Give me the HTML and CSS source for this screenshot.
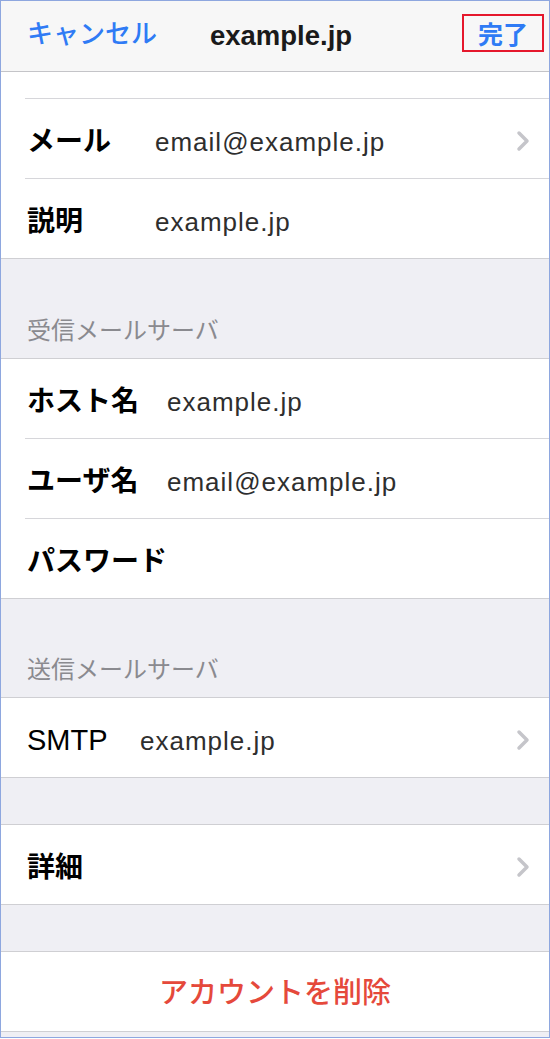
FILE: index.html
```html
<!DOCTYPE html>
<html lang="ja">
<head>
    <meta charset="UTF-8">
    <meta name="viewport" content="width=device-width, initial-scale=1.0">
    <title>example.jp</title>
    <link rel="stylesheet" href="styles.css">
</head>
<body>
    <div class="screen">
        <header class="navbar">
            <span class="nav-cancel">キャンセル</span>
            <span class="nav-title">example.jp</span>
            <span class="nav-done">完了</span>
        </header>

        <div class="group group-account">
            <div class="row row-cut"></div>
            <div class="row">
                <span class="label">メール</span>
                <span class="value">email@example.jp</span>
                <svg class="chevron" width="14" height="22" viewBox="0 0 14 22"><polyline points="3,3 11,11 3,19" /></svg>
            </div>
            <div class="row">
                <span class="label">説明</span>
                <span class="value">example.jp</span>
            </div>
        </div>

        <div class="section-header">受信メールサーバ</div>
        <div class="group group-incoming">
            <div class="row">
                <span class="label">ホスト名</span>
                <span class="value">example.jp</span>
            </div>
            <div class="row">
                <span class="label">ユーザ名</span>
                <span class="value">email@example.jp</span>
            </div>
            <div class="row">
                <span class="label">パスワード</span>
            </div>
        </div>

        <div class="section-header section-header-2">送信メールサーバ</div>
        <div class="group group-outgoing">
            <div class="row">
                <span class="label label-latin">SMTP</span>
                <span class="value">example.jp</span>
                <svg class="chevron" width="14" height="22" viewBox="0 0 14 22"><polyline points="3,3 11,11 3,19" /></svg>
            </div>
        </div>

        <div class="spacer"></div>
        <div class="group">
            <div class="row">
                <span class="label">詳細</span>
                <svg class="chevron" width="14" height="22" viewBox="0 0 14 22"><polyline points="3,3 11,11 3,19" /></svg>
            </div>
        </div>

        <div class="spacer"></div>
        <div class="group">
            <div class="row row-danger">アカウントを削除</div>
        </div>
    </div>
</body>
</html>
```

FILE: styles.css
```css
* {
    margin: 0;
    padding: 0;
    box-sizing: border-box;
}

body {
    font-family: "Noto Sans CJK JP", "Liberation Sans", sans-serif;
    background-color: #ffffff;
}

.screen {
    width: 550px;
    height: 1038px;
    border: 1px solid #8ea7df;
    background-color: #efeff4;
    overflow: hidden;
}

/* top navigation bar */
.navbar {
    height: 71px;
    display: grid;
    grid-template-columns: 1fr auto 1fr;
    align-items: center;
    background-color: #f7f7f7;
    border-bottom: 1px solid #c4c4c8;
}

.nav-cancel {
    justify-self: start;
    padding-left: 26px;
    margin-bottom: 8px;
    color: #2f7bf5;
    font-size: 26px;
    font-weight: 500;
    line-height: 34px;
}

.nav-title {
    margin-left: 12px;
    font-family: "Liberation Sans", Arial, sans-serif;
    font-size: 27.5px;
    font-weight: bold;
    color: #1a1a1a;
}

.nav-done {
    justify-self: end;
    margin-right: 5px;
    margin-bottom: 6px;
    padding: 0 14px;
    border: 2px solid #e5182c;
    color: #2f7bf5;
    font-size: 25px;
    font-weight: bold;
    line-height: 34px;
}

/* grouped list */
.group {
    background-color: #ffffff;
    border-top: 1px solid #cfcfd3;
    border-bottom: 1px solid #cfcfd3;
    --label-w: 128px;
}

.group-account {
    border-top: none;
}

.group-incoming {
    --label-w: 140px;
}

.group-outgoing {
    --label-w: 113px;
}

.row {
    height: 80px;
    margin-left: 24px;
    padding: 0 19px 0 2px;
    display: flex;
    align-items: center;
    border-bottom: 1px solid #d6d6da;
}

.row:last-child {
    height: 79px;
    border-bottom: none;
}

.row-cut {
    height: 27px;
}

.label {
    width: var(--label-w);
    flex-shrink: 0;
    font-size: 28px;
    font-weight: bold;
    color: #000000;
}

.label-latin {
    font-family: "Liberation Sans", Arial, sans-serif;
    font-weight: normal;
    font-size: 29px;
    margin-top: 6px;
}

.value {
    margin-top: 8px;
    font-family: "Liberation Sans", Arial, sans-serif;
    font-size: 26px;
    letter-spacing: 1px;
    color: #2e2e2e;
}

.chevron {
    margin-left: auto;
    margin-top: 4px;
    fill: none;
    stroke: #c5c5ca;
    stroke-width: 3.5;
    stroke-linecap: round;
    stroke-linejoin: round;
}

.row-danger {
    justify-content: center;
    margin-left: 0;
    padding: 0 0 4px 0;
    color: #e5493b;
    font-size: 29px;
    font-weight: 500;
}

/* grey gaps between groups */
.section-header {
    height: 99px;
    padding: 0 0 14px 26px;
    display: flex;
    align-items: flex-end;
    font-size: 24px;
    line-height: 1.2;
    color: #8a8a8f;
}

.section-header-2 {
    height: 98px;
}

.spacer {
    height: 46px;
}
```
